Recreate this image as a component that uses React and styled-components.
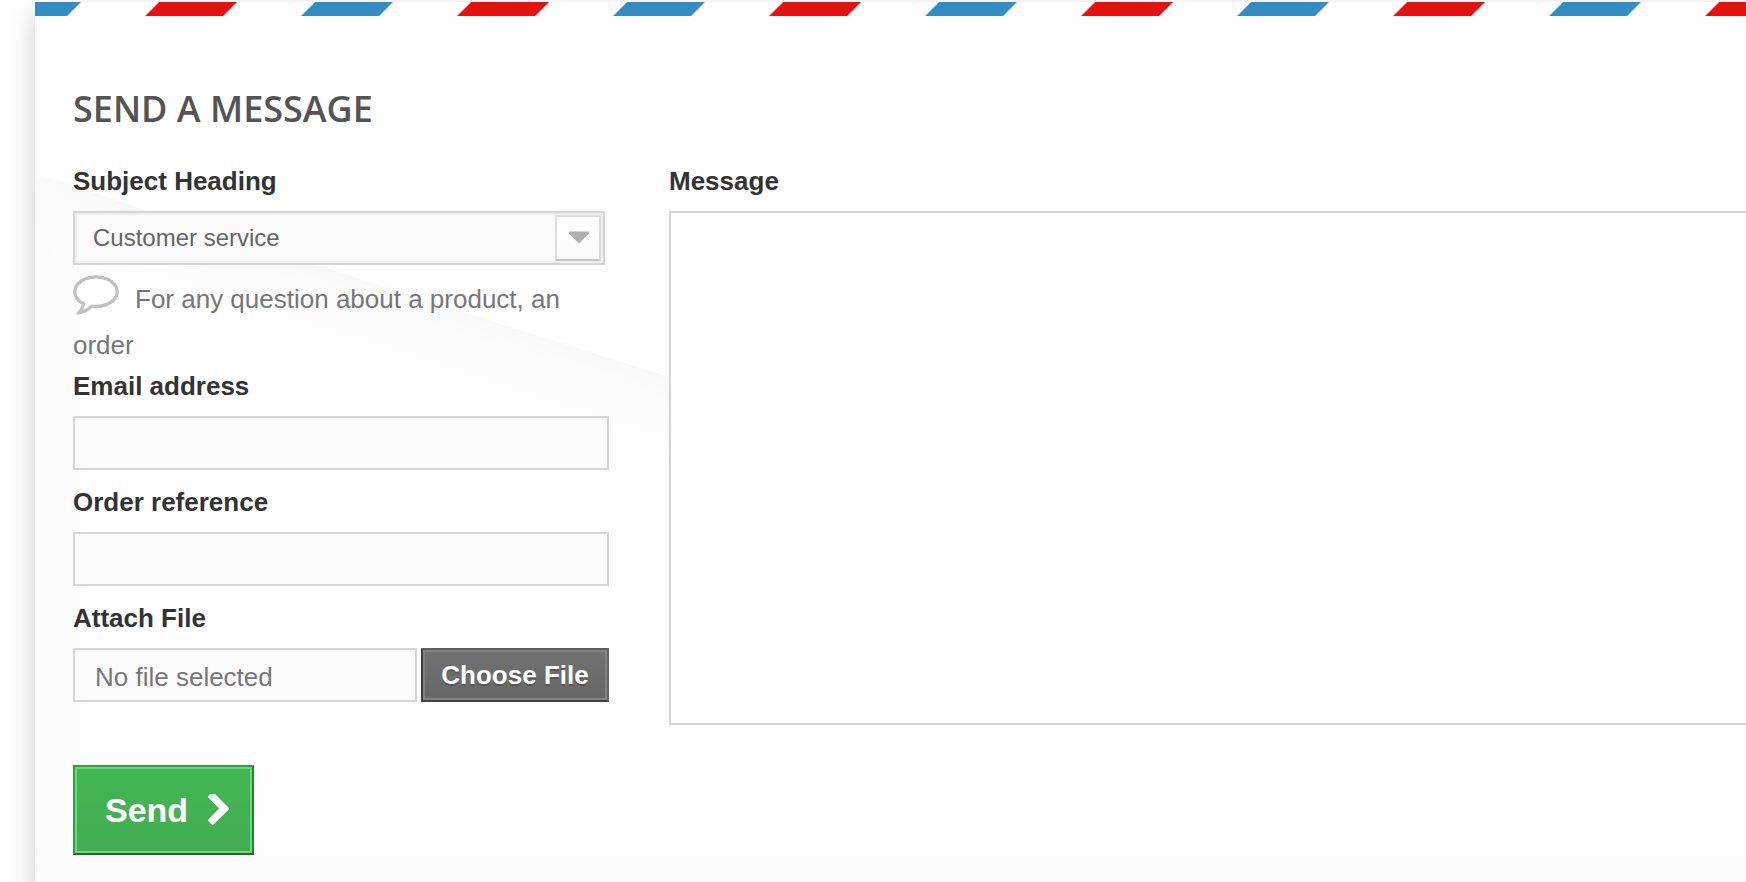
import React from "react";
import styled, { createGlobalStyle } from "styled-components";

const GlobalStyle = createGlobalStyle`
  * { box-sizing: border-box; }
  html, body { margin: 0; padding: 0; background: #fff; overflow: hidden; }
  body { font: 26px/36px "Liberation Sans", Arial, sans-serif; color: #777; }
`;

const Page = styled.main`
  height: 882px;
  width: 100%;
  padding: 2px 0 0 35px;
  overflow: hidden;
`;

const Panel = styled.form`
  position: relative;
  width: 2200px;
  height: 960px;
  background: #fefefe;
  box-shadow: 0 10px 26px rgba(0, 0, 0, 0.2);
`;

const AirmailStrip = styled.div`
  width: 1711px;
  height: 14px;
  background: repeating-linear-gradient(
    135deg,
    #338cc3 0 31.9px,
    #fff 33.3px 87.1px,
    #e5110f 88.5px 142.2px,
    #fff 143.6px 197.4px,
    #338cc3 198.8px 220.62px
  );
`;

const Swoosh = styled.svg`
  position: absolute;
  left: 0;
  top: 14px;
  pointer-events: none;
`;

const Content = styled.div`
  position: relative;
  padding: 0 38px;
`;

const Title = styled.h3`
  margin: 0;
  padding-top: 70px;
  font: 600 36px/46px "Open Sans", sans-serif;
  color: #555454;
  text-transform: uppercase;
`;

const Columns = styled.div`
  display: flex;
  gap: 60px;
  margin-top: 31px;
`;

const Column = styled.div`
  width: ${(p) => p.$width}px;
  flex: none;
`;

const Label = styled.label`
  display: block;
  height: 48px;
  font-weight: 700;
  line-height: 36px;
  color: #333;
`;

const Field = styled.div`
  height: 116px;
`;

const TextInput = styled.input`
  display: block;
  width: 536px;
  height: 54px;
  padding: 0 20px;
  border: 2px solid #d6d4d4;
  border-radius: 0;
  outline: none;
  background: #fbfbfb;
  font: 26px "Liberation Sans", Arial, sans-serif;
  color: #777;
`;

const Select = styled.div`
  display: flex;
  align-items: center;
  justify-content: space-between;
  width: 532px;
  height: 54px;
  padding: 0 2px 0 18px;
  border: 2px solid #d6d4d4;
  box-shadow: inset 0 0 0 2px #efefef;
  background: #fbfbfb;
  font-size: 24px;
  color: #666;
`;

const SelectArrow = styled.span`
  display: flex;
  justify-content: center;
  width: 46px;
  height: 46px;
  padding: 14px 0 0 2px;
  border: 2px solid #dcdcdc;
  border-bottom-color: #c2c2c2;
  background: linear-gradient(#fff, #fbfbfb);
`;

const Hint = styled.p`
  width: 536px;
  height: 103px;
  margin: 0;
  padding-top: 10px;
  line-height: 46px;

  svg { margin-right: 16px; vertical-align: -7px; }
`;

const FileRow = styled.div`
  display: flex;
  gap: 4px;
`;

const FileName = styled.span`
  width: 344px;
  height: 54px;
  padding: 2px 20px 0;
  border: 2px solid #d6d4d4;
  background: #fbfbfb;
  line-height: 50px;
`;

const FileButton = styled.button`
  width: 188px;
  height: 54px;
  padding: 0;
  border: 2px solid;
  border-color: #5f5f5f #666 #423f3f #3f3d3d;
  box-shadow: inset 0 0 0 2px #828282;
  background: linear-gradient(#727272, #666);
  font: 700 26px/46px "Liberation Sans", Arial, sans-serif;
  color: #fff;
  text-shadow: 0 2px rgba(0, 0, 0, 0.2);
`;

const MessageArea = styled.textarea`
  display: block;
  width: 1440px;
  height: 514px;
  border: 2px solid #d6d4d4;
  outline: none;
  resize: none;
  background: #fefefe;
`;

const SendButton = styled.button`
  display: flex;
  align-items: center;
  width: 181px;
  height: 90px;
  margin-top: 40px;
  padding: 0 22px 1px 30px;
  border: 2px solid;
  border-color: #399a49 #247f32 #1a6d27 #399a49;
  box-shadow: inset 0 0 0 2px #74d578;
  background: linear-gradient(#43b754, #42ac52);
  font: 700 34px/40px "Liberation Sans", Arial, sans-serif;
  color: #fff;

  svg { margin: -1px 0 0 20px; }
`;

const BubbleIcon = () => (
  <svg width="46" height="40" viewBox="0 256 1792 1536" fill="#c0c0c0">
    <path d="M896 384q-204 0-381.5 69.5t-282 187.5-104.5 255q0 112 71.5 213.5t201.5 175.5l87 50-27 96q-24 91-70 172 152-63 275-171l43-38 57 6q69 8 130 8 204 0 381.5-69.5t282-187.5 104.5-255-104.5-255-282-187.5-381.5-69.5zm896 512q0 174-120 321.5t-326 233-450 85.5q-70 0-145-8-198 175-460 242-49 14-114 22h-5q-15 0-27-10.5t-16-27.5v-1q-3-4-.5-12t2-10 4.5-9.5l6-9 7-8.5 8-9q7-8 31-34.5t34.5-38 31-39.5 32.5-51 27-59 26-76q-157-89-247.5-220t-90.5-281q0-174 120-321.5t326-233 450-85.5 450 85.5 326 233 120 321.5z" />
  </svg>
);

const ChevronIcon = () => (
  <svg width="21" height="31" viewBox="346 114 1036 1524" preserveAspectRatio="none" fill="#fff">
    <path d="M1363 877l-742 742q-19 19-45 19t-45-19l-166-166q-19-19-19-45t19-45l531-531-531-531q-19-19-19-45t19-45l166-166q19-19 45-19t45 19l742 742q19 19 19 45t-19 45z" />
  </svg>
);

const PanelSwoosh = () => (
  <Swoosh width="1711" height="866" viewBox="35 16 1711 866">
    <defs>
      <linearGradient id="sweep" gradientUnits="userSpaceOnUse" x1="400" y1="292" x2="376" y2="367">
        <stop offset="0" stopColor="#f8f8f8" />
        <stop offset="0.35" stopColor="#fbfbfb" />
        <stop offset="1" stopColor="#fefefe" />
      </linearGradient>
      <linearGradient id="side" gradientUnits="userSpaceOnUse" x1="35" y1="0" x2="97" y2="0">
        <stop offset="0" stopColor="#fafafa" />
        <stop offset="1" stopColor="#fafafa" stopOpacity="0" />
      </linearGradient>
      <linearGradient id="foot" gradientUnits="userSpaceOnUse" x1="0" y1="835" x2="0" y2="890">
        <stop offset="0" stopColor="#fbfbfb" stopOpacity="0" />
        <stop offset="1" stopColor="#fbfbfb" />
      </linearGradient>
    </defs>
    <path d="M35 177Q52 177 80 188L145 210L450 308L669 377V520H35Z" fill="url(#sweep)" />
    <path d="M35 177Q52 177 80 188L97 194V882H35Z" fill="url(#side)" />
    <rect x="35" y="835" width="1711" height="47" fill="url(#foot)" />
  </Swoosh>
);

export default function App() {
  return (
    <Page>
      <GlobalStyle />
      <Panel onSubmit={(e) => e.preventDefault()}>
        <AirmailStrip />
        <PanelSwoosh />
        <Content>
          <Title>Send a message</Title>
          <Columns>
            <Column $width={536}>
              <Label>Subject Heading</Label>
              <Select>
                Customer service
                <SelectArrow>
                  <svg width="22" height="13" viewBox="0 0 22 13">
                    <path d="M1 0.5H21V2.5L11 12.5L1 2.5Z" fill="#b0b0b0" />
                  </svg>
                </SelectArrow>
              </Select>
              <Hint>
                <BubbleIcon />
                For any question about a product, an order
              </Hint>
              <Field>
                <Label htmlFor="email">Email address</Label>
                <TextInput id="email" />
              </Field>
              <Field>
                <Label htmlFor="order">Order reference</Label>
                <TextInput id="order" />
              </Field>
              <Label>Attach File</Label>
              <FileRow>
                <FileName>No file selected</FileName>
                <FileButton type="button">Choose File</FileButton>
              </FileRow>
            </Column>
            <Column $width={1440}>
              <Label htmlFor="message">Message</Label>
              <MessageArea id="message" />
            </Column>
          </Columns>
          <SendButton type="submit">
            Send
            <ChevronIcon />
          </SendButton>
        </Content>
      </Panel>
    </Page>
  );
}
